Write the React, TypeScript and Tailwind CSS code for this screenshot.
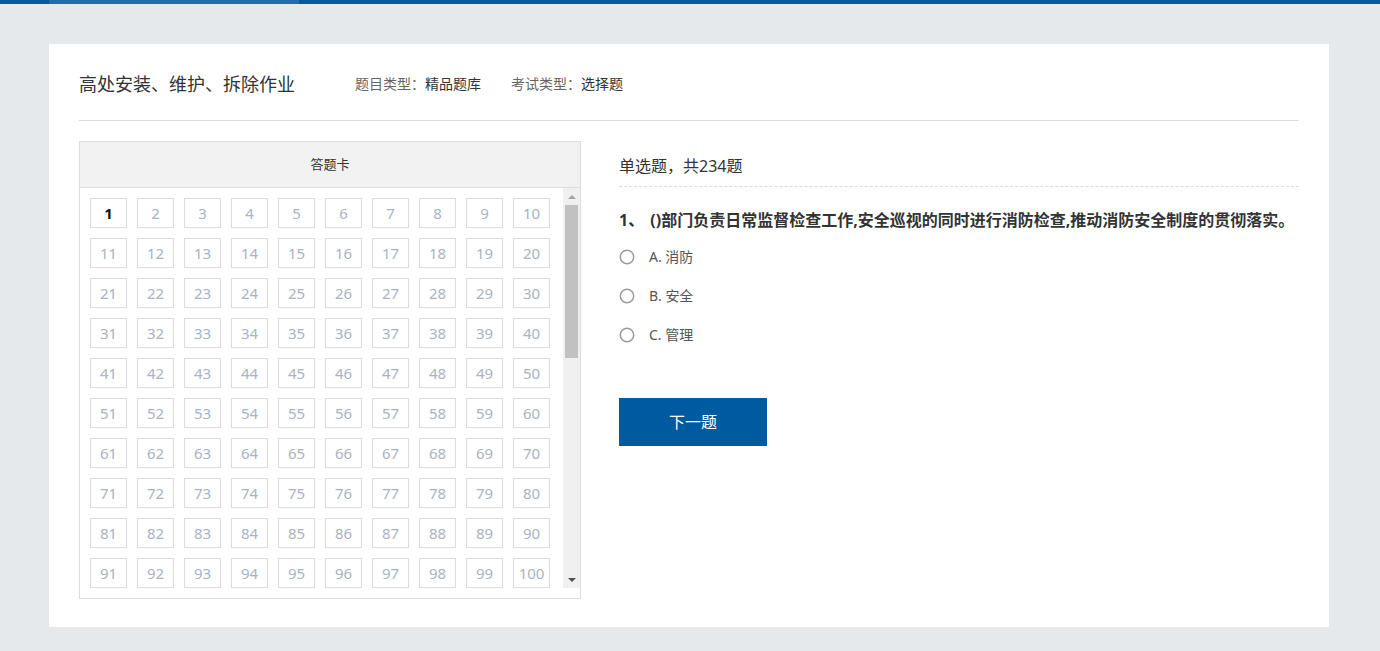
import React from 'react';

// only the first 100 fit in the visible card area
const VISIBLE = 100;

const options = [
  { key: 'A', text: '消防' },
  { key: 'B', text: '安全' },
  { key: 'C', text: '管理' },
];

const Radio: React.FC = () => (
  <svg width="16" height="16" viewBox="0 0 16 16" className="shrink-0">
    <circle cx="8" cy="8" r="6.7" fill="#fff" stroke="#9a9a9a" strokeWidth="1.5" />
  </svg>
);

// fake classic scrollbar (native one is hidden in the capture)
const ScrollBar: React.FC = () => (
  <div className="w-[17px] shrink-0 bg-[#f0f0f0] flex flex-col">
    <div className="h-[17px] flex items-center justify-center">
      <div className="w-0 h-0 border-x-[4px] border-x-transparent border-b-[4px] border-b-[#a3a3a3]"></div>
    </div>
    <div className="mx-[2px] h-[153px] bg-[#c1c1c1]"></div>
    <div className="flex-1"></div>
    <div className="h-[17px] flex items-center justify-center">
      <div className="w-0 h-0 border-x-[4px] border-x-transparent border-t-[4px] border-t-[#505050]"></div>
    </div>
  </div>
);

const App: React.FC = () => {
  const nums = Array.from({ length: VISIBLE }, (_, i) => i + 1);

  return (
    <div className="min-h-screen bg-[#e6e9ec] font-['Noto_Sans','Noto_Sans_CJK_SC',sans-serif] text-[#333]">
      {/* top bar */}
      <div className="h-[4px] bg-[#005a9e] pl-[49px]">
        <div className="h-full w-[250px] bg-[#1f6cae]"></div>
      </div>

      <div className="pl-[49px] pt-[40px]">
        <div className="w-[1280px] bg-white px-[30px] pb-[28px]">
          {/* header */}
          <div className="flex items-center pt-[28px] pb-[24px] border-b border-[#dedede]">
            <h1 className="text-[18px] leading-[24px] font-normal text-[#333]">高处安装、维护、拆除作业</h1>
            <div className="ml-[60px] text-[14px] leading-[24px]">
              <span className="text-[#666]">题目类型：</span>
              <span className="text-[#333]">精品题库</span>
            </div>
            <div className="ml-[30px] text-[14px] leading-[24px]">
              <span className="text-[#666]">考试类型：</span>
              <span className="text-[#333]">选择题</span>
            </div>
          </div>

          <div className="flex mt-[20px] gap-[38px]">
            {/* answer card */}
            <div className="w-[502px] border border-[#dcdcdc] pb-[10px]">
              <div className="h-[46px] bg-[#f2f2f2] border-b border-[#dcdcdc] flex items-center justify-center text-[13px] text-[#333]">
                答题卡
              </div>
              <div className="h-[400px] flex">
                <div className="flex-1 overflow-hidden">
                  <div className="grid grid-cols-[repeat(10,37px)] gap-[10px] pl-[10px] pt-[10px]">
                    {nums.map((n) => (
                      <div
                        key={n}
                        className={
                          n === 1
                            ? 'h-[30px] border border-[#dcdcdc] flex items-center justify-center text-[15px] font-bold text-[#111]'
                            : 'h-[30px] border border-[#dcdcdc] flex items-center justify-center text-[15px] text-[#aab3bf]'
                        }
                      >
                        {n}
                      </div>
                    ))}
                  </div>
                </div>
                <ScrollBar />
              </div>
            </div>

            {/* question */}
            <div className="flex-1">
              <div className="pt-[15px] pb-[10px] border-b border-dashed border-[#dcdcdc] text-[16px] leading-[20px] text-[#333]">
                单选题，共234题
              </div>
              <div className="mt-[21px] text-[16px] leading-[24px] font-bold text-[#333]">
                1、 <span className="ml-[2px]">()部门负责日常监督检查工作,安全巡视的同时进行消防检查,推动消防安全制度的贯彻落实。</span>
              </div>
              <div className="mt-[5px]">
                {options.map((o) => (
                  <label key={o.key} className="h-[39px] flex items-center gap-[14px] text-[14px] text-[#555] cursor-pointer">
                    <Radio />
                    <span>
                      {o.key}. {o.text}
                    </span>
                  </label>
                ))}
              </div>
              <button className="mt-[44px] w-[148px] h-[48px] bg-[#005aa0] text-white text-[16px] flex items-center justify-center">
                下一题
              </button>
            </div>
          </div>
        </div>
      </div>
    </div>
  );
};

export default App;
